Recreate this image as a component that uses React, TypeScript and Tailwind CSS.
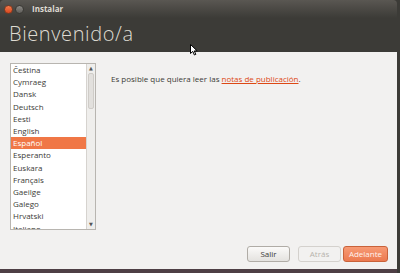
import React from "react";

const langs = [
  "Čeština",
  "Cymraeg",
  "Dansk",
  "Deutsch",
  "Eesti",
  "English",
  "Español",
  "Esperanto",
  "Euskara",
  "Français",
  "Gaeilge",
  "Galego",
  "Hrvatski",
  "Italiano",
];

export default function App() {
  return (
    <div
      className="relative w-[400px] h-[273px] flex flex-col bg-[#3c3b37] overflow-hidden"
      style={{ fontFamily: '"Open Sans", "DejaVu Sans", sans-serif' }}
    >
      {/* title bar */}
      <div className="h-[18px] flex items-center pl-[4px] gap-[2px] bg-gradient-to-b from-[#5a5752] to-[#3c3b37] rounded-t-[4px] mr-[3px]">
        <div className="w-[9px] h-[9px] rounded-full bg-gradient-to-b from-[#f57a4b] to-[#d9461c] border border-[#7a3a22]" />
        <div className="w-[9px] h-[9px] rounded-full bg-gradient-to-b from-[#8c8a86] to-[#5f5d59] border border-[#3a3935]" />
        <span className="ml-[6px] text-[8px] font-bold text-[#dfdbd2] leading-none">Instalar</span>
      </div>
      {/* header */}
      <div className="h-[34px] flex items-center pl-[9px] mr-[3px] bg-[#3c3b37]">
        <span className="text-[20px] font-light tracking-[0.6px] text-[#dfdbd2] leading-none -mt-[3px]">Bienvenido/a</span>
      </div>
      {/* body */}
      <div className="flex-1 bg-[#f2f1f0] mr-[3px] flex flex-col">
        <div className="flex-1 flex pt-[11px] pl-[10px]">
          <div className="w-[86px] h-[167px] flex border border-[#b8b5b0] bg-white">
            <div className="flex-1 overflow-hidden">
              {langs.map((l) => (
                <div
                  key={l}
                  className={
                    "h-[12.2px] flex items-center pl-[2px] text-[8px] leading-none " +
                    (l === "Español" ? "bg-[#f07746] text-white" : "text-[#3c3b37]")
                  }
                >
                  {l}
                </div>
              ))}
            </div>
            <div className="w-[9px] border-l border-[#d6d3cf] bg-[#efeeec] flex flex-col items-center">
              <div className="text-[5px] leading-none text-[#555] mt-[2px]">▲</div>
              <div className="w-[6px] h-[36px] mt-[2px] rounded-[2px] bg-[#e2e0dd] border border-[#cfccc8]" />
              <div className="flex-1" />
              <div className="text-[5px] leading-none text-[#555] mb-[2px]">▼</div>
            </div>
          </div>
          <div className="pl-[15px] pt-[10px] text-[8px] text-[#3c3b37]">
            Es posible que quiera leer las{" "}
            <span className="text-[#dd4814] underline">notas de publicación</span>.
          </div>
        </div>
        <div className="flex justify-end items-end pr-[9px] pb-[7px]">
          <button className="w-[43px] h-[16px] rounded-[3px] border border-[#b0aca6] bg-gradient-to-b from-[#fbfaf9] to-[#e4e2df] text-[8px] text-[#3c3b37]">
            Salir
          </button>
          <button className="w-[43px] h-[16px] ml-[8px] rounded-[3px] border border-[#d4d1cd] bg-[#f2f1f0] text-[8px] text-[#b7b3ad]">
            Atrás
          </button>
          <button className="w-[45px] h-[16px] ml-[2px] rounded-[3px] border border-[#c9623a] bg-gradient-to-b from-[#f79a74] to-[#ec7a50] text-[8px] text-[#fff3ee]">
            Adelante
          </button>
        </div>
        <div className="h-[4px] bg-[#4e3f45]" />
      </div>
      {/* mouse cursor */}
      <svg className="absolute left-[190px] top-[44px]" width="8" height="12" viewBox="0 0 8 12">
        <path d="M0.5 0.5 L0.5 9.5 L2.8 7.4 L4.4 11 L5.8 10.4 L4.3 6.9 L7.2 6.9 Z" fill="#fff" stroke="#000" strokeWidth="1" />
      </svg>
    </div>
  );
}
